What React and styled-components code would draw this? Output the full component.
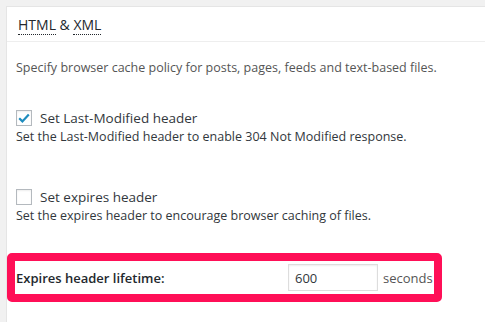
import React from 'react';
import styled, { createGlobalStyle } from 'styled-components';

const GlobalStyle = createGlobalStyle`
  html, body {
    margin: 0;
    padding: 0;
    background: #f1f1f1;
    height: 322px;
    overflow: hidden;
  }
  body {
    font-family: "Open Sans", "Noto Sans", sans-serif;
  }
`;

const Panel = styled.div`
  margin: 6px 0 0 6px;
  height: 316px;
  background: #fff;
  border-top: 1px solid #e5e5e5;
  border-left: 1px solid #e5e5e5;
  box-sizing: border-box;
`;

const PanelHeader = styled.h3`
  margin: 0;
  height: 35px;
  padding: 0 0 0 11px;
  display: flex;
  align-items: center;
  font-size: 14px;
  font-weight: 400;
  color: #23282d;
  border-bottom: 1px solid #eee;
  box-sizing: border-box;

  abbr {
    text-decoration: none;
    border-bottom: 1px dotted #23282d;
    line-height: 15px;
  }
`;

const Body = styled.div`
  padding: 0 0 0 9px;
  color: #444;
  font-size: 12.5px;
`;

const Intro = styled.p`
  margin: 17px 0 0;
  line-height: 17px;
  color: #555;
`;

const Option = styled.div`
  margin-top: ${p => p.$gap}px;
`;

const CheckRow = styled.label`
  display: flex;
  align-items: center;
  gap: 8px;
  height: 17px;
  font-size: 13.5px;
  color: #32373c;
`;

const Box = styled.span`
  width: 16px;
  height: 16px;
  box-sizing: border-box;
  border: 1px solid #b4b9be;
  background: #fff;
  box-shadow: inset 0 1px 2px rgba(0, 0, 0, 0.07);
  display: flex;
  align-items: center;
  justify-content: center;
`;

const Hint = styled.div`
  margin-top: 2px;
  line-height: 17px;
  color: #32373c;
`;

const Highlight = styled.div`
  margin: 29px 0 0 0;
  width: 435px;
  height: 49px;
  border: 8px solid #ff0f57;
  border-radius: 5px;
  box-sizing: border-box;
  display: flex;
  align-items: center;
  padding-left: 1px;
  font-size: 13px;
  color: #23282d;
`;

const FieldLabel = styled.span`
  width: 272px;
  font-weight: 600;
  font-size: 13px;
  color: #23282d;
`;

const NumberInput = styled.input`
  width: 90px;
  height: 27px;
  box-sizing: border-box;
  border: 1px solid #ddd;
  box-shadow: inset 0 1px 2px rgba(0, 0, 0, 0.07);
  padding: 0 6px;
  font-family: inherit;
  font-size: 13px;
  color: #32373c;
  outline: none;
`;

const Unit = styled.span`
  margin-left: 5px;
  color: #555;
`;

const Check = () => (
  <svg width="14" height="14" viewBox="0 0 14 14">
    <path d="M2.2 7.2 L5.4 10.4 L11.8 3.4" fill="none" stroke="#1e8cbe" strokeWidth="2.2" />
  </svg>
);

export default function App() {
  return (
    <>
      <GlobalStyle />
      <Panel>
        <PanelHeader>
          <span>
            <abbr title="Hypertext Markup Language">HTML</abbr> &amp;{' '}
            <abbr title="eXtensible Markup Language">XML</abbr>
          </span>
        </PanelHeader>
        <Body>
          <Intro>Specify browser cache policy for posts, pages, feeds and text-based files.</Intro>
          <Option $gap={33}>
            <CheckRow>
              <Box><Check /></Box>
              Set Last-Modified header
            </CheckRow>
            <Hint>Set the Last-Modified header to enable 304 Not Modified response.</Hint>
          </Option>
          <Option $gap={43}>
            <CheckRow>
              <Box />
              Set expires header
            </CheckRow>
            <Hint>Set the expires header to encourage browser caching of files.</Hint>
          </Option>
        </Body>
        <Highlight>
          <FieldLabel>Expires header lifetime:</FieldLabel>
          <NumberInput defaultValue="600" />
          <Unit>seconds</Unit>
        </Highlight>
      </Panel>
    </>
  );
}
